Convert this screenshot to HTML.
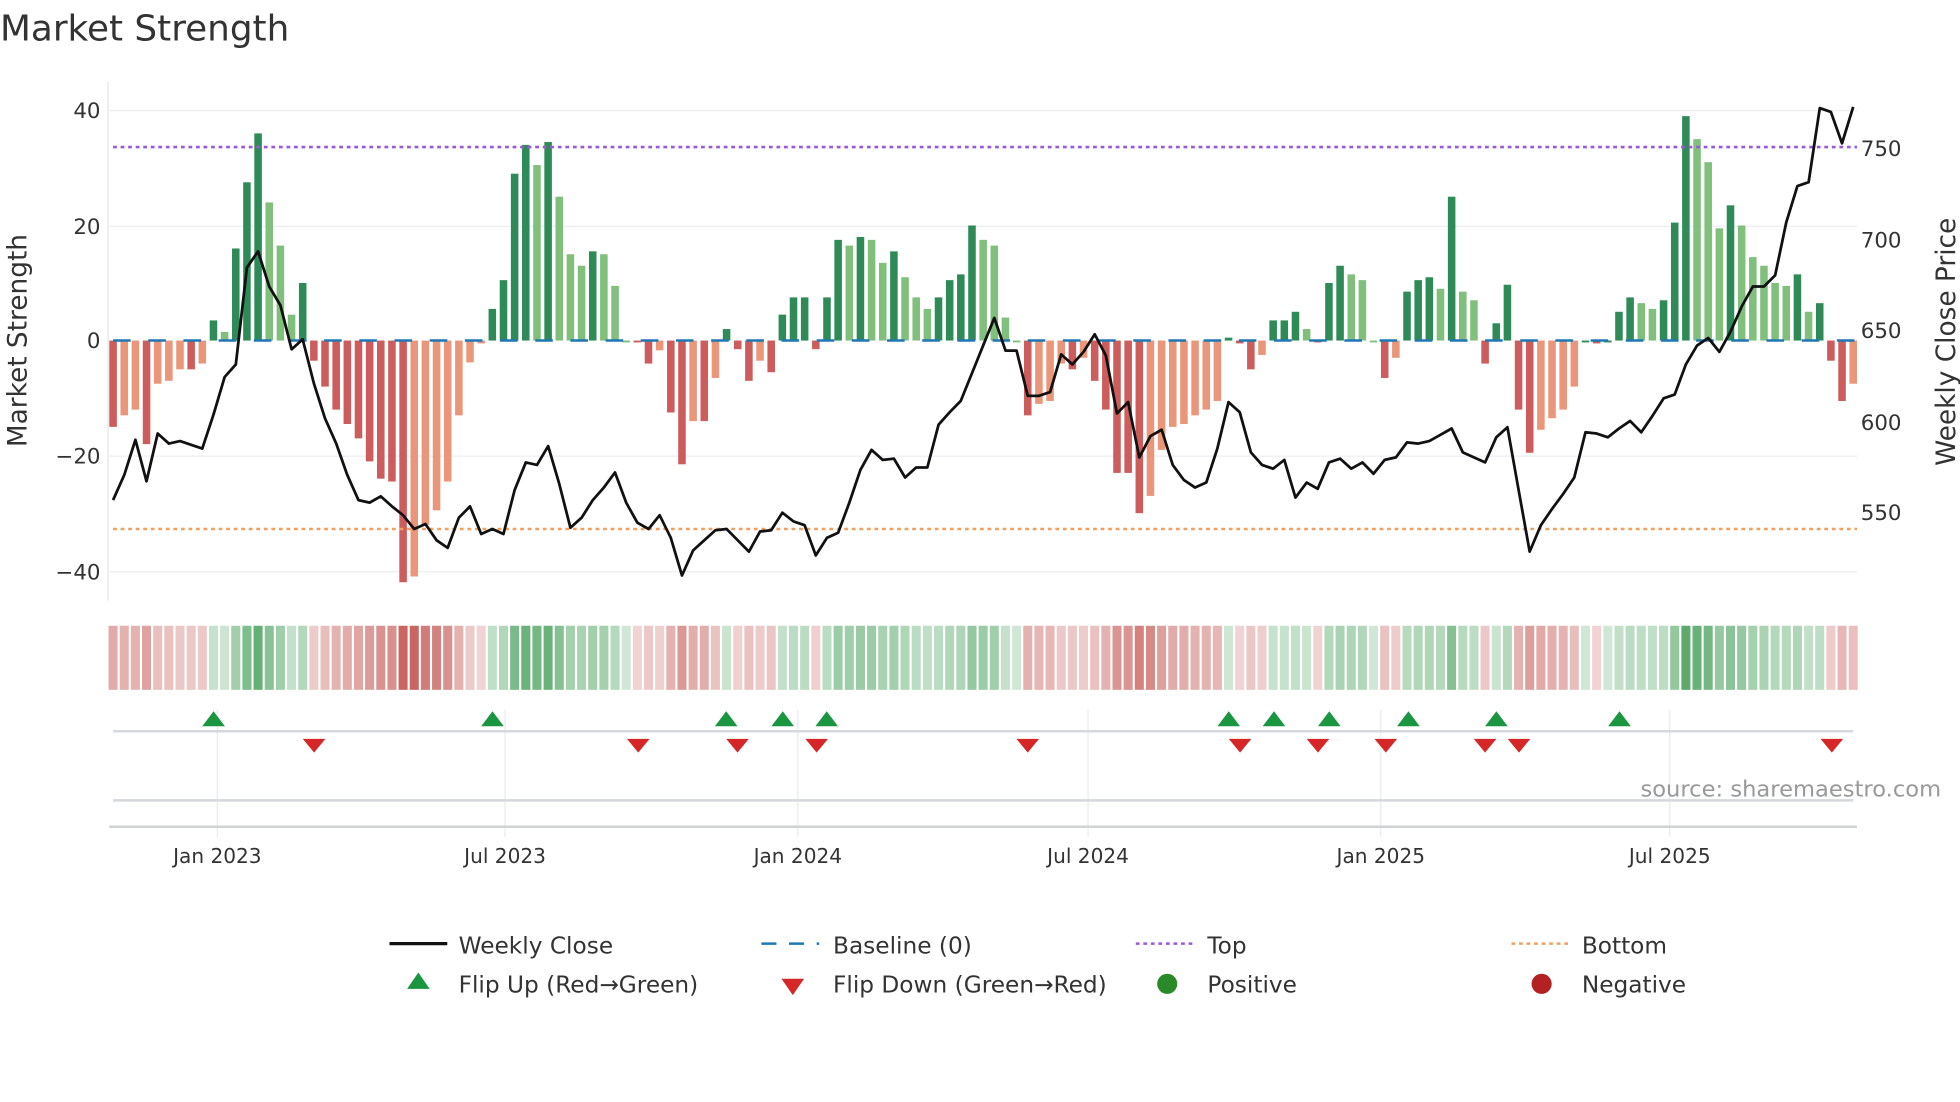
<!DOCTYPE html>
<html><head><meta charset="utf-8"><style>
html,body{margin:0;padding:0;background:#fff;width:1960px;height:1102px;overflow:hidden}
svg{display:block}
text{font-family:"DejaVu Sans","Liberation Sans",sans-serif}
</style></head><body>
<svg id="s" width="1960" height="1102" viewBox="0 0 1560 877" xmlns="http://www.w3.org/2000/svg">
<text x="0" y="32" font-size="28.5" fill="#333">Market Strength</text>
<g stroke="#eceef2" stroke-width="1">
<line x1="87" y1="88" x2="1478" y2="88"/><line x1="87" y1="180" x2="1478" y2="180"/>
<line x1="87" y1="363" x2="1478" y2="363"/><line x1="87" y1="455" x2="1478" y2="455"/>
</g>
<line x1="86" y1="65" x2="86" y2="478" stroke="#e4e6ea"/>
<g id="bars"></g>
<line x1="90" y1="271" x2="1478" y2="271" stroke="#1f77b4" stroke-width="2" stroke-dasharray="14,14"/>
<line x1="90" y1="117" x2="1478" y2="117" stroke="#9b59d6" stroke-width="2" stroke-dasharray="3,3"/>
<line x1="90" y1="421" x2="1478" y2="421" stroke="#f0a060" stroke-width="2" stroke-dasharray="3,3"/>
<polyline id="price" fill="none" stroke="#111" stroke-width="2.2" stroke-linejoin="round"/>
<g font-size="17" fill="#333">
<text x="80" y="94" text-anchor="end">40</text><text x="80" y="186" text-anchor="end">20</text>
<text x="80" y="277" text-anchor="end">0</text><text x="80" y="369" text-anchor="end">−20</text>
<text x="80" y="461" text-anchor="end">−40</text>
<text x="1481" y="124">750</text><text x="1481" y="197">700</text><text x="1481" y="269">650</text>
<text x="1481" y="342">600</text><text x="1481" y="414">550</text>
</g>
<text transform="translate(21,271) rotate(-90)" font-size="21" fill="#333" text-anchor="middle">Market Strength</text>
<text transform="translate(1556,272) rotate(-90)" font-size="21" fill="#333" text-anchor="middle">Weekly Close Price</text>
<g id="heat"></g>
<g stroke="#e8ecef" stroke-width="1" id="vg"></g>
<line x1="90" y1="582" x2="1475" y2="582" stroke="#d5d8dc" stroke-width="2"/>
<line x1="90" y1="637" x2="1475" y2="637" stroke="#d5d8dc" stroke-width="2"/>
<line x1="87" y1="658" x2="1478" y2="658" stroke="#d0d3d6" stroke-width="2"/>
<g id="marks"></g>
<text x="1545" y="634" font-size="18" fill="#999" text-anchor="end">source: sharemaestro.com</text>
<g font-size="16" fill="#333" text-anchor="middle">
<text x="173" y="687">Jan 2023</text><text x="402" y="687">Jul 2023</text><text x="635" y="687">Jan 2024</text>
<text x="866" y="687">Jul 2024</text><text x="1099" y="687">Jan 2025</text><text x="1329" y="687">Jul 2025</text>
</g>
<g font-size="18.5" fill="#333">
<line x1="310" y1="751" x2="356" y2="751" stroke="#111" stroke-width="2.5"/><text x="365" y="759">Weekly Close</text>
<line x1="606" y1="751" x2="652" y2="751" stroke="#1f77b4" stroke-width="2" stroke-dasharray="12,10"/><text x="663" y="759">Baseline (0)</text>
<line x1="904" y1="751" x2="950" y2="751" stroke="#9b59d6" stroke-width="2" stroke-dasharray="3,3"/><text x="961" y="759">Top</text>
<line x1="1203" y1="751" x2="1249" y2="751" stroke="#f0a060" stroke-width="2" stroke-dasharray="3,3"/><text x="1259" y="759">Bottom</text>
<polygon points="333,774 324,787 342,787" fill="#1a9641"/><text x="365" y="790">Flip Up (Red→Green)</text>
<polygon points="622,779 640,779 631,792" fill="#d62728"/><text x="663" y="790">Flip Down (Green→Red)</text>
<circle cx="929" cy="783" r="8" fill="#2a8a2a"/><text x="961" y="790">Positive</text>
<circle cx="1227" cy="783" r="8" fill="#b22222"/><text x="1259" y="790">Negative</text>
</g>
</svg>
<script>
var V=[-15,-13,-12,-18,-7.5,-7,-5,-5,-4,3.5,1.5,16,27.5,36,24,16.5,4.5,10,-3.5,-8,-12,-14.5,-17,-21,-24,-24.5,-42,-41,-32,-29.5,-24.5,-13,-3.8,-0.5,5.5,10.5,29,34,30.5,34.5,25,15,13,15.5,15,9.5,0,-0.3,-4,-1.7,-12.5,-21.5,-14,-14,-6.5,2,-1.5,-7,-3.5,-5.5,4.5,7.5,7.5,-1.5,7.5,17.5,16.5,18,17.5,13.5,15.5,11,7.5,5.5,7.5,10.5,11.5,20,17.5,16.5,4,0,-13,-11,-10.5,-4,-5,-3,-7,-12,-23,-23,-30,-27,-19,-15,-14.5,-13,-12,-10.5,0.5,-0.5,-5,-2.5,3.5,3.5,5,2,-0.3,10,13,11.5,10.5,0,-6.5,-3,8.5,10.5,11,9,25,8.5,7,-4,3,9.7,-12,-19.5,-15.5,-13.5,-12,-8,0,-0.5,0,5,7.5,6.5,5.5,7,20.5,39,35,31,19.5,23.5,20,14.5,13,10,9.5,11.5,5,6.5,-3.5,-10.5,-7.5];
var P=[398,378,350,383,345,353,351,354,357,330,300,290,213,200,228,243,278,270,305,333,353,378,398,400,395,403,410,421,417,430,436,412,403,425,421,425,390,368,370,355,385,420,412,398,388,376,400,416,421,410,428,458,438,430,422,421,430,439,423,422,408,415,418,442,428,424,400,374,358,366,365,380,372,372,338,328,319,297,275,253,279,279,315,315,312,282,290,280,266,283,329,320,364,347,342,370,382,388,384,357,320,328,360,370,373,366,396,384,389,368,365,373,368,377,366,364,352,353,351,346,341,360,364,368,348,340,390,439,418,405,393,380,344,345,348,341,335,344,331,317,314,290,275,269,280,264,244,228,228,219,177,148,145,86,89,114,85];
var ns="http://www.w3.org/2000/svg";
function el(t,a,p){var e=document.createElementNS(ns,t);for(var k in a)e.setAttribute(k,a[k]);p.appendChild(e);return e;}
var n=V.length,step=(1475-90)/(n-1);
var bars=document.getElementById('bars'),heat=document.getElementById('heat');
function mix(c,f){var r=Math.round(255+(c[0]-255)*f),g=Math.round(255+(c[1]-255)*f),b=Math.round(255+(c[2]-255)*f);return "rgb("+r+","+g+","+b+")";}
for(var i=0;i<n;i++){
 var v=V[i],x=90+i*step,pv=i?V[i-1]:v,col;
 if(v>=0)col=(v>=pv)?"#2e8b57":"#80bf7c";else col=(v<=pv)?"#cd5c5c":"#e9967a";
 var y=271-v*4.58,h=Math.abs(v*4.58);
 if(h<1.5)h=1.5;
 el('rect',{x:x-3,y:v>=0?y:271,width:6,height:h,fill:col},bars);
 var f=Math.min(Math.abs(v)/40,1)*0.65+0.25;
 var hc=v>=0?mix([70,160,90],f):mix([195,85,80],f);
 el('rect',{x:x-3.6,y:498,width:7.2,height:51,fill:hc},heat);
 el('line',{x1:x+4.4,y1:498,x2:x+4.4,y2:549,stroke:"#fff","stroke-width":1.2},heat);
}
var pts=[];for(var i=0;i<P.length;i++)pts.push((90+i*step).toFixed(1)+","+P[i]);
document.getElementById('price').setAttribute('points',pts.join(' '));
var vg=document.getElementById('vg');[173,402,635,866,1099,1329].forEach(function(x){el('line',{x1:x,y1:565,x2:x,y2:666},vg);});
var mk=document.getElementById('marks');
[170,392,578,623,658,978,1014,1058,1121,1191,1289].forEach(function(x){el('polygon',{points:x+",566 "+(x-9)+",578 "+(x+9)+",578",fill:"#1a9641"},mk);});
[250,508,587,650,818,987,1049,1103,1182,1209,1458].forEach(function(x){el('polygon',{points:(x-9)+",588 "+(x+9)+",588 "+x+",599",fill:"#d62728"},mk);});
</script>
</body></html>
